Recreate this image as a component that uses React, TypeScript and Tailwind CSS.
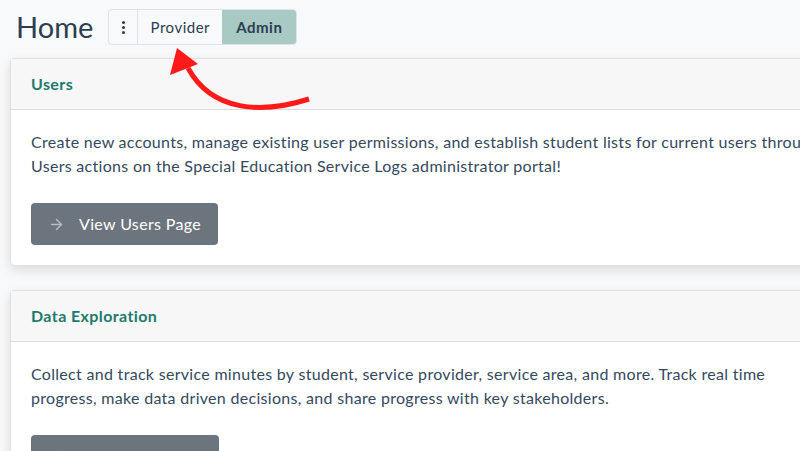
import { ArrowRight } from "lucide-react";

const font = { fontFamily: "Lato, 'Open Sans', sans-serif" };

function Card({ title, text, action }: { title: string; text: string; action: string }) {
  return (
    <div className="ml-[10px] w-[820px] rounded-[4px] border border-[#e0e0e0] bg-white shadow-[0_4px_12px_rgba(0,0,0,0.12)]">
      <div className="flex h-[51px] items-center border-b border-[#dcdcdc] bg-[#f7f7f7] px-5 text-[16px] font-bold tracking-[0.4px] text-[#1f7a6e]">
        {title}
      </div>
      <div className="px-5 pt-[20px] pb-5">
        <p className="w-[800px] text-[16px] leading-[24px] tracking-[0.3px] text-[#34495e]">{text}</p>
        <button className="mt-[25px] flex h-[42px] items-center gap-[14px] rounded-[4px] bg-[#6c757d] pl-[17px] pr-[17px] text-[16px] tracking-[0.35px] text-white">
          <ArrowRight size={17} strokeWidth={2} className="text-[#b8bdc2]" />
          {action}
        </button>
      </div>
    </div>
  );
}

export default function App() {
  return (
    <div className="relative h-[451px] w-[800px] overflow-hidden bg-[#f8f9fb]" style={font}>
      <div className="flex items-center gap-[15px] px-[16px] pt-[9px]">
        <h1 className="text-[29px] leading-[36px] text-[#2c3e50]">Home</h1>
        <div className="flex h-[36px] overflow-hidden rounded-[4px] border border-[#dfe2e6] bg-[#f8f9fb] text-[15px] tracking-[0.5px] text-[#2c3e50]">
          <div className="flex w-[29px] flex-col items-center justify-center gap-[2px] border-r border-[#dfe2e6]">
            <span className="h-[3px] w-[3px] rounded-full bg-[#2c3e50]" />
            <span className="h-[3px] w-[3px] rounded-full bg-[#2c3e50]" />
            <span className="h-[3px] w-[3px] rounded-full bg-[#2c3e50]" />
          </div>
          <div className="flex w-[84px] items-center justify-center">Provider</div>
          <div className="flex w-[74px] items-center justify-center bg-[#a8c9c4] font-bold">Admin</div>
        </div>
      </div>

      <div className="mt-[13px] flex flex-col gap-[24px]">
        <Card
          title="Users"
          text="Create new accounts, manage existing user permissions, and establish student lists for current users through Users actions on the Special Education Service Logs administrator portal!"
          action="View Users Page"
        />
        <Card
          title="Data Exploration"
          text="Collect and track service minutes by student, service provider, service area, and more. Track real time progress, make data driven decisions, and share progress with key stakeholders."
          action="Data Exploration"
        />
      </div>

      <svg className="absolute left-0 top-0" width="800" height="451" viewBox="0 0 800 451">
        <path d="M309 99 C 262 114, 212 112, 188 68" fill="none" stroke="#ff1a1a" strokeWidth="5" />
        <polygon points="177,48 170,75 198,64" fill="#ff1a1a" />
      </svg>
    </div>
  );
}
